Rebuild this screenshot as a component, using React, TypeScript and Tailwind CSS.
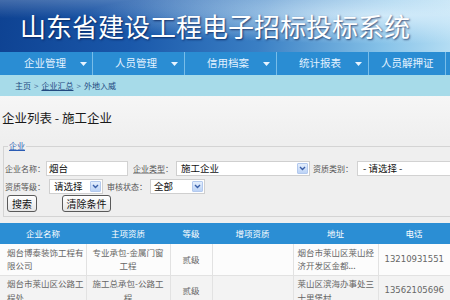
import React from "react";

const Arrow = () => (
  <svg width="7" height="4" viewBox="0 0 7 4" className="shrink-0">
    <path d="M0 0 L7 0 L3.5 4 Z" fill="#e8f4ff" />
  </svg>
);

const SelArrow = () => (
  <div className="w-[11px] h-[11px] shrink-0 rounded-[1px] border border-[#b3c9ee] bg-[linear-gradient(to_bottom,#e4eefc,#bcd3f6)] flex items-center justify-center">
    <svg width="7" height="5" viewBox="0 0 7 5">
      <path d="M1 1 L3.5 3.5 L6 1" fill="none" stroke="#3a5fa8" strokeWidth="1.4" />
    </svg>
  </div>
);

const Select = ({ w, text, pl = 4 }: { w: number; text: string; pl?: number }) => (
  <div
    className="h-[15px] bg-white border border-[#cfcfcf] flex items-center justify-between pr-[1px] shrink-0"
    style={{ width: w, paddingLeft: pl }}
  >
    <span className="text-[9.5px] text-[#111] leading-none whitespace-nowrap">{text}</span>
    <SelArrow />
  </div>
);

const navItems = [
  { t: "企业管理", a: true },
  { t: "人员管理", a: true },
  { t: "信用档案", a: true },
  { t: "统计报表", a: true },
  { t: "人员解押证", a: false },
];

export default function App() {
  return (
    <div
      className="w-[450px] h-[300px] overflow-hidden bg-[#efefef]"
      style={{ fontFamily: '"Noto Sans CJK SC", "Noto Sans", sans-serif' }}
    >
      {/* header */}
      <div className="h-[52px] flex items-center pl-[20px] bg-[linear-gradient(to_bottom,rgba(255,255,255,0.22),rgba(255,255,255,0)_35%),radial-gradient(ellipse_at_85%_30%,rgba(220,240,252,0.85),rgba(220,240,252,0)_55%),linear-gradient(100deg,#0e4292_0%,#1a58aa_30%,#3a7fc4_58%,#86c2e8_85%,#b4ddf3_100%)]">
        <span className="text-[26px] leading-none text-white [text-shadow:1px_1px_2px_rgba(0,20,70,0.7)] whitespace-nowrap">
          山东省建设工程电子招标投标系统
        </span>
      </div>

      {/* nav */}
      <div className="h-[23px] bg-[#2a8dd3] flex">
        {navItems.map((n, i) => (
          <div
            key={i}
            className={`h-full flex items-center border-r border-[#78bde9] ${i === 0 ? "w-[93px] pl-[24px]" : i === 4 ? "w-[77px] pl-[12px]" : "w-[92px] pl-[22px]"}`}
          >
            <span className="text-[10.5px] text-[#e4f2ff] leading-none whitespace-nowrap">{n.t}</span>
            {n.a && (
              <span className="ml-[14px] flex">
                <Arrow />
              </span>
            )}
          </div>
        ))}
      </div>

      {/* breadcrumb */}
      <div className="h-[21px] bg-[#a7dbe9] flex items-center pl-[15px] text-[8px] text-[#23497f] leading-none whitespace-nowrap">
        <span>主页</span>
        <span className="mx-[3px] text-[#4a6f9a]">&gt;</span>
        <span className="underline">企业汇总</span>
        <span className="mx-[3px] text-[#4a6f9a]">&gt;</span>
        <span>外地入威</span>
      </div>

      {/* title */}
      <div className="h-[44px] flex items-center pl-[2px] bg-[linear-gradient(to_bottom,#f6f6f6,#efefef)]">
        <span className="text-[12.5px] text-[#1a1a1a] leading-none whitespace-nowrap">企业列表 - 施工企业</span>
      </div>

      {/* fieldset */}
      <fieldset className="ml-[3px] border border-[#d4d4d4] pb-[4px]">
        <legend className="ml-[4px] px-[1px] text-[8px] leading-[12px] text-[#2b5cb4] underline">企业</legend>
        <div className="pt-[9px] flex items-center h-[24px] text-[8px] text-[#555] leading-none whitespace-nowrap">
          <div className="w-[42px] pl-[1px]">企业名称：</div>
          <div className="w-[82px] h-[15px] bg-white border border-[#d2d2d2] flex items-center pl-[2px]">
            <span className="text-[9.5px] text-[#111]">烟台</span>
          </div>
          <div className="w-[48px] pl-[5px]">
            <span className="underline decoration-[#aaa]">企业类型</span>：
          </div>
          <Select w={134} text="施工企业" pl={4} />
          <div className="w-[47px] pl-[3px]">资质类别：</div>
          <div className="w-[100px] h-[15px] bg-white border border-[#d2d2d2] flex items-center pl-[5px]">
            <span className="text-[9.5px] text-[#111]">- 请选择 -</span>
          </div>
        </div>
        <div className="mt-[3px] flex items-center h-[15px] text-[8px] text-[#555] leading-none whitespace-nowrap">
          <div className="w-[45px] pl-[1px]">资质等级：</div>
          <Select w={54} text="请选择" pl={4} />
          <div className="w-[47px] pl-[4px]">审核状态：</div>
          <Select w={55} text="全部" pl={3} />
        </div>
        <div className="mt-[1px] flex items-center pl-[3px]">
          <button className="w-[30px] h-[17px] rounded-[3px] border border-[#5a5a5a] bg-[linear-gradient(to_bottom,#ffffff,#e6e6e6)] text-[10px] leading-none text-[#111] flex items-center justify-center">
            搜索
          </button>
          <button className="ml-[25px] w-[49px] h-[17px] rounded-[3px] border border-[#5a5a5a] bg-[linear-gradient(to_bottom,#ffffff,#e6e6e6)] text-[10px] leading-none text-[#111] flex items-center justify-center">
            清除条件
          </button>
        </div>
      </fieldset>

      {/* table */}
      <table className="mt-[6px] w-[450px] table-fixed border-collapse text-[8.5px] text-[#666]">
        <colgroup>
          <col className="w-[86px]" />
          <col className="w-[84px]" />
          <col className="w-[42px]" />
          <col className="w-[81px]" />
          <col className="w-[85px]" />
          <col className="w-[72px]" />
        </colgroup>
        <thead>
          <tr className="h-[21px] bg-[#2b8ed4] text-white">
            <th className="font-normal">企业名称</th>
            <th className="font-normal">主项资质</th>
            <th className="font-normal">等级</th>
            <th className="font-normal">增项资质</th>
            <th className="font-normal">地址</th>
            <th className="font-normal">电话</th>
          </tr>
        </thead>
        <tbody className="leading-[13.5px]">
          <tr className="h-[31px] bg-[#fcfcfc] border-b border-[#e2e2e2]">
            <td className="pl-[7px] border-r border-[#e2e2e2] whitespace-nowrap">烟台博泰装饰工程有<br />限公司</td>
            <td className="text-center border-r border-[#e2e2e2] whitespace-nowrap">专业承包-金属门窗<br />工程</td>
            <td className="text-center border-r border-[#e2e2e2]">贰级</td>
            <td className="border-r border-[#e2e2e2]"></td>
            <td className="pl-[4px] border-r border-[#e2e2e2] whitespace-nowrap">烟台市莱山区莱山经<br />济开发区金都...</td>
            <td className="text-center text-[8.5px]" style={{ fontFamily: '"DejaVu Sans", sans-serif' }}>13210931551</td>
          </tr>
          <tr className="h-[31px] bg-[#f3f3f3]">
            <td className="pl-[7px] border-r border-[#e2e2e2] whitespace-nowrap">烟台市莱山区公路工<br />程处</td>
            <td className="text-center border-r border-[#e2e2e2] whitespace-nowrap">施工总承包-公路工<br />程</td>
            <td className="text-center border-r border-[#e2e2e2]">贰级</td>
            <td className="border-r border-[#e2e2e2]"></td>
            <td className="pl-[4px] border-r border-[#e2e2e2] whitespace-nowrap">莱山区滨海办事处三<br />十里堡村</td>
            <td className="text-center text-[8.5px]" style={{ fontFamily: '"DejaVu Sans", sans-serif' }}>13562105696</td>
          </tr>
        </tbody>
      </table>
    </div>
  );
}
